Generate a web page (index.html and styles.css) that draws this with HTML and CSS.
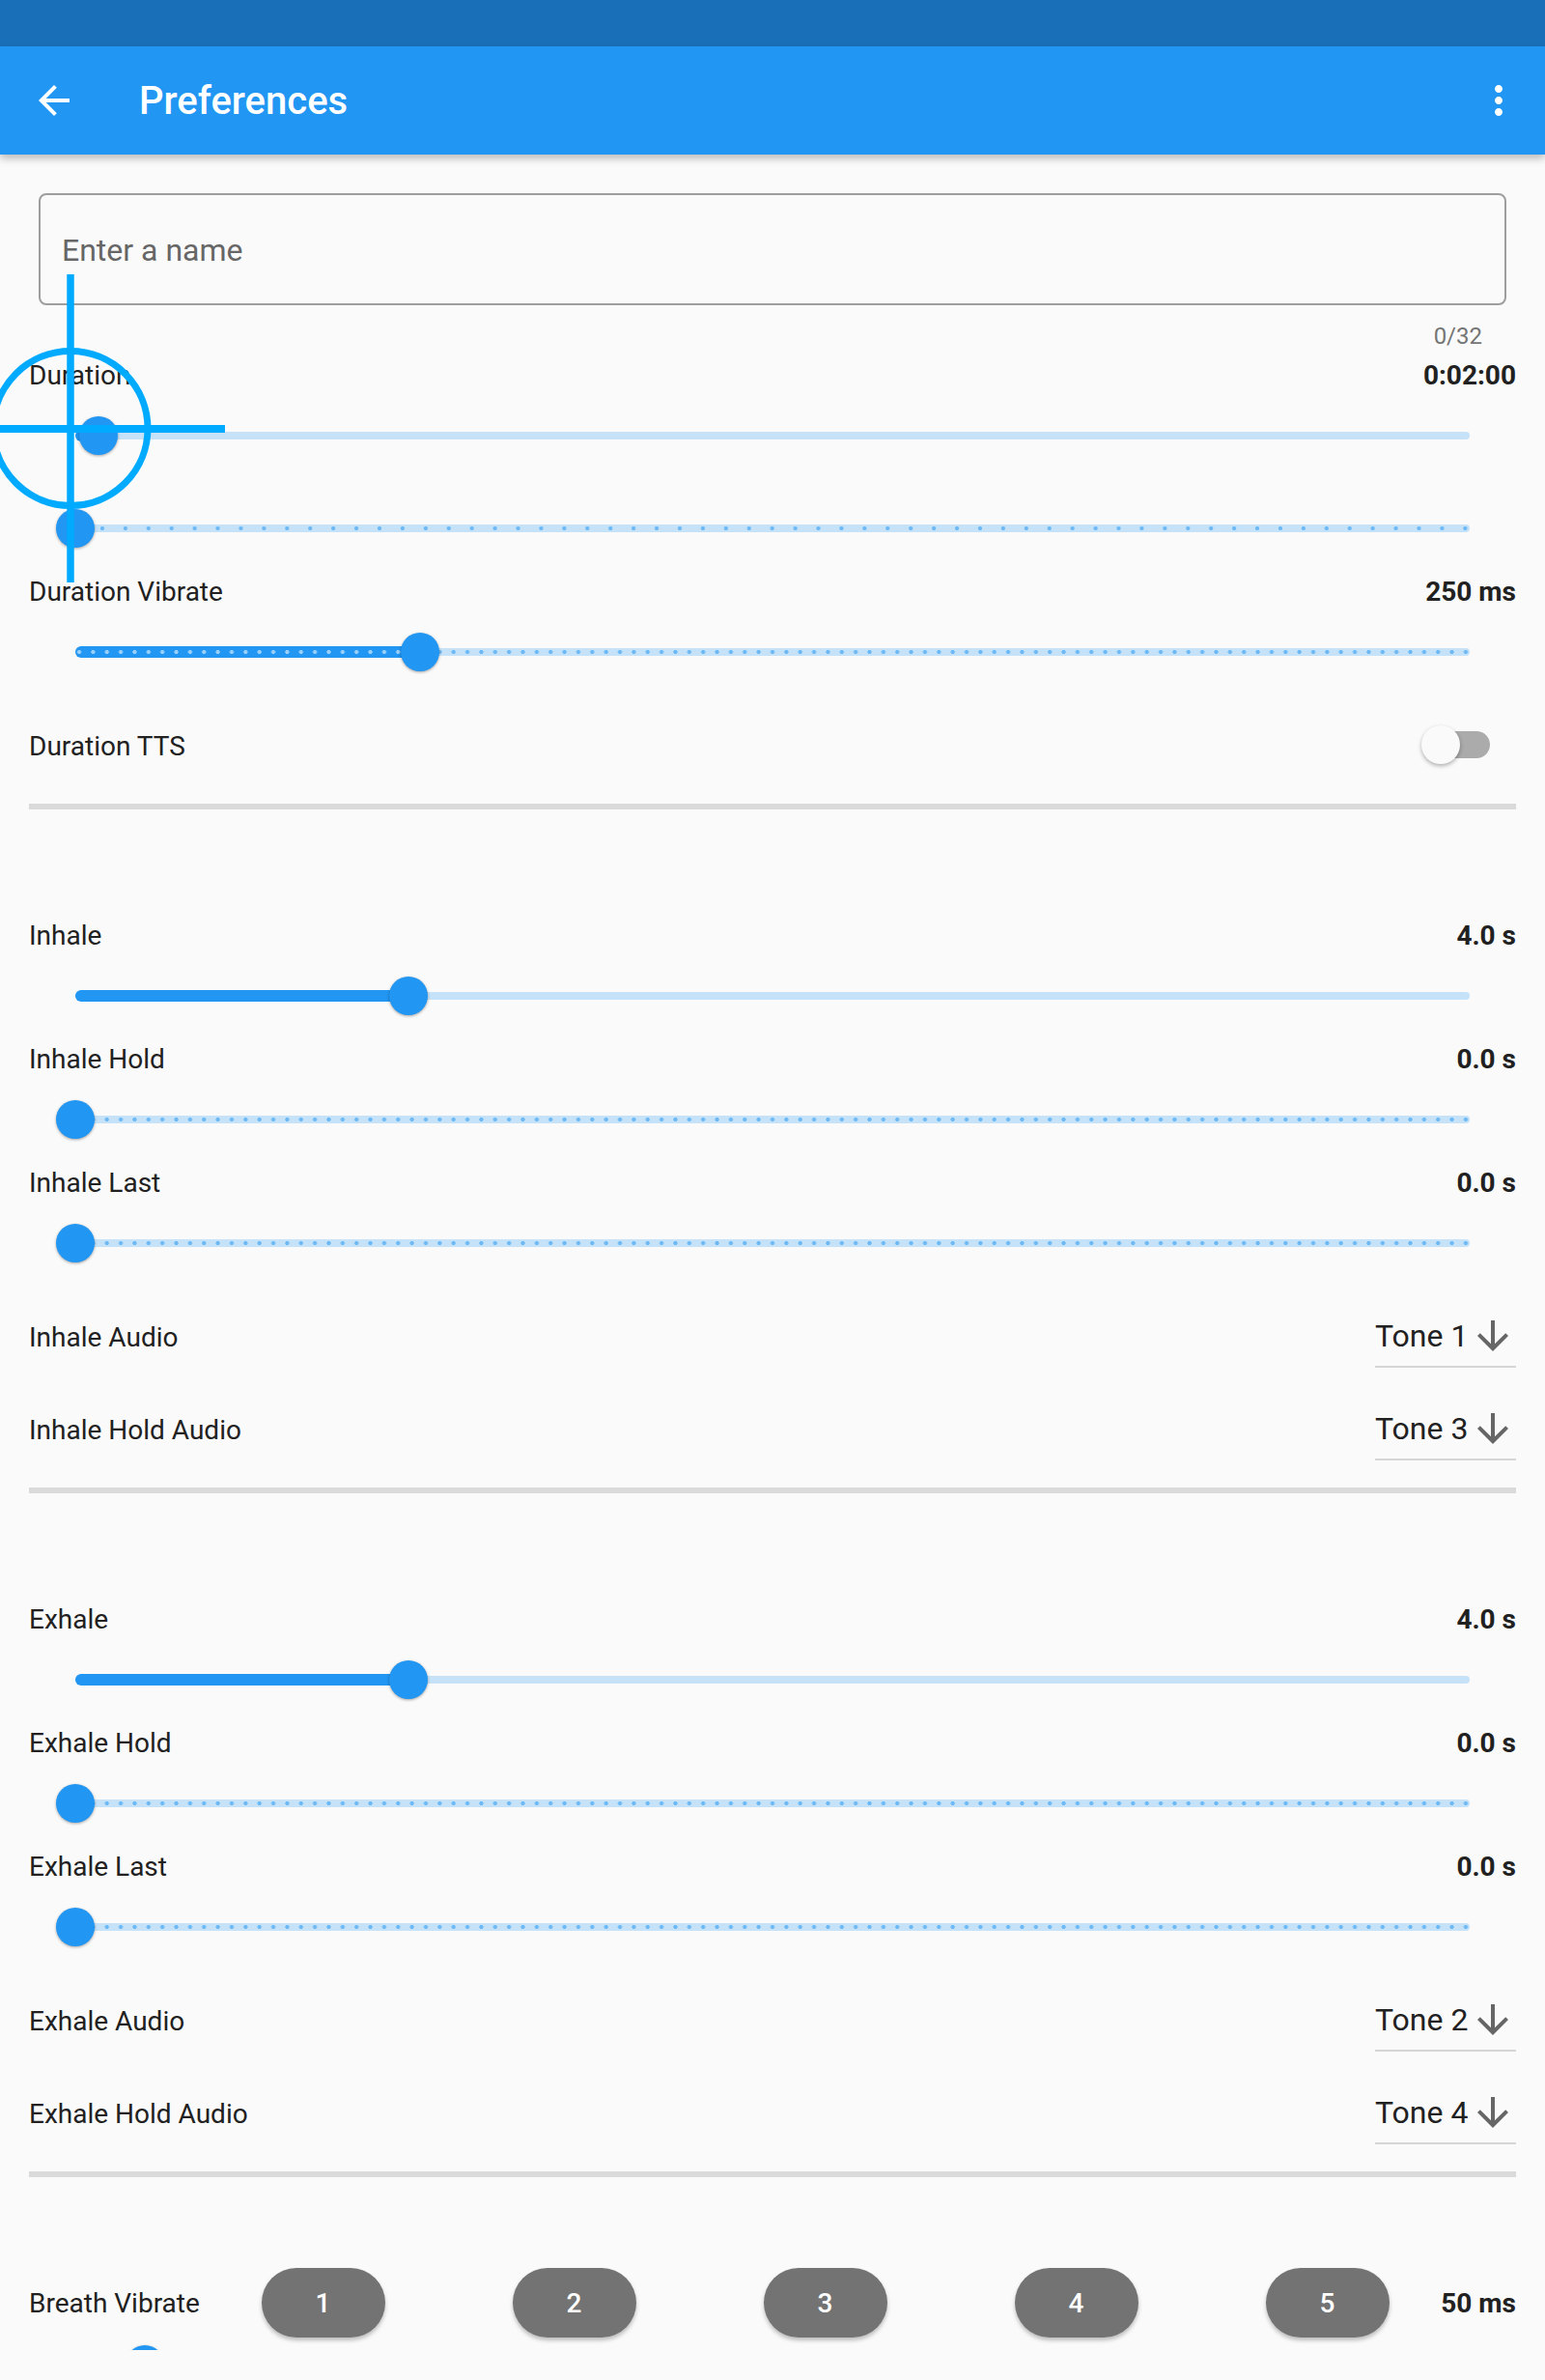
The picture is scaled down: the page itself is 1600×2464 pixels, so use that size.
FILE: index.html
```html
<!DOCTYPE html>
<html lang="en">
<head>
<meta charset="utf-8">
<title>Preferences</title>
<link rel="stylesheet" href="styles.css">
</head>
<body>
<div class="status"></div>
<header class="appbar">
  <div class="leading">
    <svg class="icon" viewBox="0 0 24 24"><path d="M20 11H7.83l5.59-5.59L12 4l-8 8 8 8 1.41-1.41L7.83 13H20v-2z"/></svg>
  </div>
  <h1 class="title">Preferences</h1>
  <div class="action">
    <svg class="icon" viewBox="0 0 24 24"><path d="M12 8c1.1 0 2-.9 2-2s-.9-2-2-2-2 .9-2 2 .9 2 2 2zm0 2c-1.1 0-2 .9-2 2s.9 2 2 2 2-.9 2-2-.9-2-2-2zm0 6c-1.1 0-2 .9-2 2s.9 2 2 2 2-.9 2-2-.9-2-2-2z"/></svg>
  </div>
</header>

<main class="content">
  <div class="name-field"><span class="hint">Enter a name</span></div>
  <div class="counter">0/32</div>

  <section class="group first">
    <div class="label-row"><span class="label">Duration</span><span class="value">0:02:00</span></div>
    <div class="slider"><div class="track"></div><div class="active" style="width:1.67%"></div><div class="thumb" style="left:1.67%"></div></div>
    <div class="slider t60"><div class="track"></div><div class="thumb" style="left:0%"></div></div>
    <div class="label-row"><span class="label">Duration Vibrate</span><span class="value">250 ms</span></div>
    <div class="slider t100"><div class="track"></div><div class="active" style="width:24.75%"></div><div class="thumb" style="left:24.75%"></div></div>
    <div class="row"><span class="label">Duration TTS</span>
      <div class="switch"><div class="switch-track"></div><div class="switch-thumb"></div></div>
    </div>
  </section>
  <div class="divider"></div>

  <section class="group">
    <div class="label-row"><span class="label">Inhale</span><span class="value">4.0 s</span></div>
    <div class="slider"><div class="track"></div><div class="active" style="width:23.9%"></div><div class="thumb" style="left:23.9%"></div></div>
    <div class="label-row"><span class="label">Inhale Hold</span><span class="value">0.0 s</span></div>
    <div class="slider t100"><div class="track"></div><div class="thumb" style="left:0%"></div></div>
    <div class="label-row"><span class="label">Inhale Last</span><span class="value">0.0 s</span></div>
    <div class="slider t100"><div class="track"></div><div class="thumb" style="left:0%"></div></div>
    <div class="row"><span class="label">Inhale Audio</span>
      <div class="dropdown"><span class="tone">Tone 1</span><svg class="arrow" viewBox="0 0 24 24"><path d="M20 12l-1.41-1.41L13 16.17V4h-2v12.17l-5.58-5.59L4 12l8 8 8-8z"/></svg></div>
    </div>
    <div class="row"><span class="label">Inhale Hold Audio</span>
      <div class="dropdown"><span class="tone">Tone 3</span><svg class="arrow" viewBox="0 0 24 24"><path d="M20 12l-1.41-1.41L13 16.17V4h-2v12.17l-5.58-5.59L4 12l8 8 8-8z"/></svg></div>
    </div>
  </section>
  <div class="divider"></div>

  <section class="group">
    <div class="label-row"><span class="label">Exhale</span><span class="value">4.0 s</span></div>
    <div class="slider"><div class="track"></div><div class="active" style="width:23.9%"></div><div class="thumb" style="left:23.9%"></div></div>
    <div class="label-row"><span class="label">Exhale Hold</span><span class="value">0.0 s</span></div>
    <div class="slider t100"><div class="track"></div><div class="thumb" style="left:0%"></div></div>
    <div class="label-row"><span class="label">Exhale Last</span><span class="value">0.0 s</span></div>
    <div class="slider t100"><div class="track"></div><div class="thumb" style="left:0%"></div></div>
    <div class="row"><span class="label">Exhale Audio</span>
      <div class="dropdown"><span class="tone">Tone 2</span><svg class="arrow" viewBox="0 0 24 24"><path d="M20 12l-1.41-1.41L13 16.17V4h-2v12.17l-5.58-5.59L4 12l8 8 8-8z"/></svg></div>
    </div>
    <div class="row"><span class="label">Exhale Hold Audio</span>
      <div class="dropdown"><span class="tone">Tone 4</span><svg class="arrow" viewBox="0 0 24 24"><path d="M20 12l-1.41-1.41L13 16.17V4h-2v12.17l-5.58-5.59L4 12l8 8 8-8z"/></svg></div>
    </div>
  </section>
  <div class="divider"></div>

  <div class="breath">
    <span class="label">Breath Vibrate</span>
    <div class="btns">
      <div class="btn">1</div>
      <div class="btn">2</div>
      <div class="btn">3</div>
      <div class="btn">4</div>
      <div class="btn">5</div>
    </div>
    <span class="value">50 ms</span>
  </div>
  <div class="slider short"><div class="track"></div><div class="active" style="width:5%"></div><div class="thumb" style="left:5%"></div></div>
</main>

<svg class="crosshair" width="240" height="320" viewBox="0 0 240 320">
  <circle cx="73" cy="159.5" r="80" fill="none" stroke="#00aaff" stroke-width="7"/>
  <line x1="73" y1="0" x2="73" y2="319" stroke="#00aaff" stroke-width="7.5"/>
  <line x1="0" y1="160" x2="233" y2="160" stroke="#00aaff" stroke-width="8"/>
</svg>
</body>
</html>
```

FILE: styles.css
```css
html, body {
  margin: 0;
  padding: 0;
}
body {
  background: #fafafa;
  font-family: Roboto, "Noto Sans", "Liberation Sans", sans-serif;
  color: #212121;
  position: relative;
  min-height: 2464px;
}

.status {
  height: 48px;
  background: #1a70b8;
}

.appbar {
  height: 112px;
  background: #2196f3;
  display: flex;
  align-items: center;
  box-shadow: 0 4px 8px rgba(0, 0, 0, 0.26);
  position: relative;
  z-index: 2;
}
.leading {
  width: 112px;
  height: 112px;
  display: flex;
  align-items: center;
  justify-content: center;
  flex: none;
}
.icon {
  width: 48px;
  height: 48px;
  fill: #ffffff;
  display: block;
}
.title {
  flex: 1;
  margin: 0 0 0 32px;
  padding-top: 2px;
  font-size: 40px;
  font-weight: 500;
  line-height: 48px;
  color: #ffffff;
}
.action {
  width: 96px;
  height: 112px;
  display: flex;
  align-items: center;
  justify-content: center;
  flex: none;
}

.content {
  height: 2273px;
  overflow: hidden;
  padding: 0 30px;
  position: relative;
  z-index: 1;
}

.name-field {
  margin: 40px 10px 0;
  height: 116px;
  box-sizing: border-box;
  border: 2px solid #9e9e9e;
  border-radius: 8px;
  display: flex;
  align-items: center;
  padding: 2px 0 0 22px;
}
.hint {
  font-size: 32px;
  color: #666666;
}
.counter {
  margin-top: 18px;
  height: 28px;
  line-height: 28px;
  font-size: 24px;
  color: #757575;
  text-align: right;
  padding-right: 35px;
}

.group {
  padding-top: 113px;
}
.group.first {
  margin-top: 9px;
  padding-top: 0;
}

.label-row {
  display: flex;
  justify-content: space-between;
  align-items: flex-start;
  height: 32px;
  line-height: 36px;
  font-size: 28px;
}
.label {
  font-size: 28px;
}
.value {
  font-weight: 700;
  font-size: 28px;
}

.slider {
  position: relative;
  height: 96px;
  margin: 0 48px;
}
.track {
  position: absolute;
  left: 0;
  right: 0;
  top: 44px;
  height: 8px;
  border-radius: 4px;
  background-color: #c6e2f8;
  background-repeat: repeat-x;
}
.active {
  position: absolute;
  left: 0;
  top: 42px;
  height: 12px;
  border-radius: 6px 0 0 6px;
  background-color: #2196f3;
  background-repeat: repeat-x;
}
.thumb {
  position: absolute;
  top: 28px;
  width: 40px;
  height: 40px;
  margin-left: -20px;
  border-radius: 50%;
  background: #2196f3;
  box-shadow: 0 1px 3px rgba(0, 0, 0, 0.35);
}

.t60 .track {
  background-image: radial-gradient(circle, #6db9f5 1.8px, rgba(109, 185, 245, 0) 2.4px);
  background-size: 23.9333px 8px;
  background-position: -7.967px 0;
}
.t60 .active {
  background-image: radial-gradient(circle, #99cff9 1.8px, rgba(153, 207, 249, 0) 2.4px);
  background-size: 23.9333px 12px;
  background-position: -7.967px 0;
}
.t100 .track {
  background-image: radial-gradient(circle, #6db9f5 1.8px, rgba(109, 185, 245, 0) 2.4px);
  background-size: 14.36px 8px;
  background-position: -3.18px 0;
}
.t100 .active {
  background-image: radial-gradient(circle, #99cff9 1.8px, rgba(153, 207, 249, 0) 2.4px);
  background-size: 14.36px 12px;
  background-position: -3.18px 0;
}

.slider.short {
  height: 56px;
}
.short .track {
  top: 24px;
}
.short .active {
  top: 22px;
}
.short .thumb {
  top: 8px;
}

.row {
  display: flex;
  align-items: center;
  justify-content: space-between;
  height: 96px;
  font-size: 28px;
}
.row .label {
  padding-top: 2px;
}

.switch {
  position: relative;
  width: 71px;
  height: 40px;
  margin-right: 27px;
}
.switch-track {
  position: absolute;
  right: 0;
  top: 6px;
  width: 66px;
  height: 28px;
  border-radius: 14px;
  background: #ababab;
}
.switch-thumb {
  position: absolute;
  left: 0;
  top: 0;
  width: 40px;
  height: 40px;
  border-radius: 50%;
  background: #fafafa;
  box-shadow: 0 2px 4px rgba(0, 0, 0, 0.3);
}

.dropdown {
  display: flex;
  align-items: center;
  width: 146px;
  height: 48px;
  padding: 9px 0 7px;
  border-bottom: 2px solid #d6d6d6;
}
.tone {
  font-size: 32px;
  color: #212121;
}
.arrow {
  width: 48px;
  height: 48px;
  margin-left: auto;
  fill: #666666;
  display: block;
}

.divider {
  height: 6px;
  margin-top: 13px;
  background: #dadada;
}

.breath {
  display: flex;
  align-items: center;
  justify-content: space-between;
  height: 72px;
  margin-top: 94px;
  font-size: 28px;
}
.btns {
  display: flex;
  gap: 132px;
  margin-left: 10px;
}
.btn {
  width: 128px;
  height: 72px;
  border-radius: 36px;
  background: #737373;
  color: #ffffff;
  font-size: 28px;
  font-weight: 500;
  display: flex;
  align-items: center;
  justify-content: center;
  box-shadow: 0 3px 4px rgba(0, 0, 0, 0.25);
}

.crosshair {
  position: absolute;
  left: 0;
  top: 284px;
  z-index: 5;
  pointer-events: none;
  overflow: visible;
}
```
